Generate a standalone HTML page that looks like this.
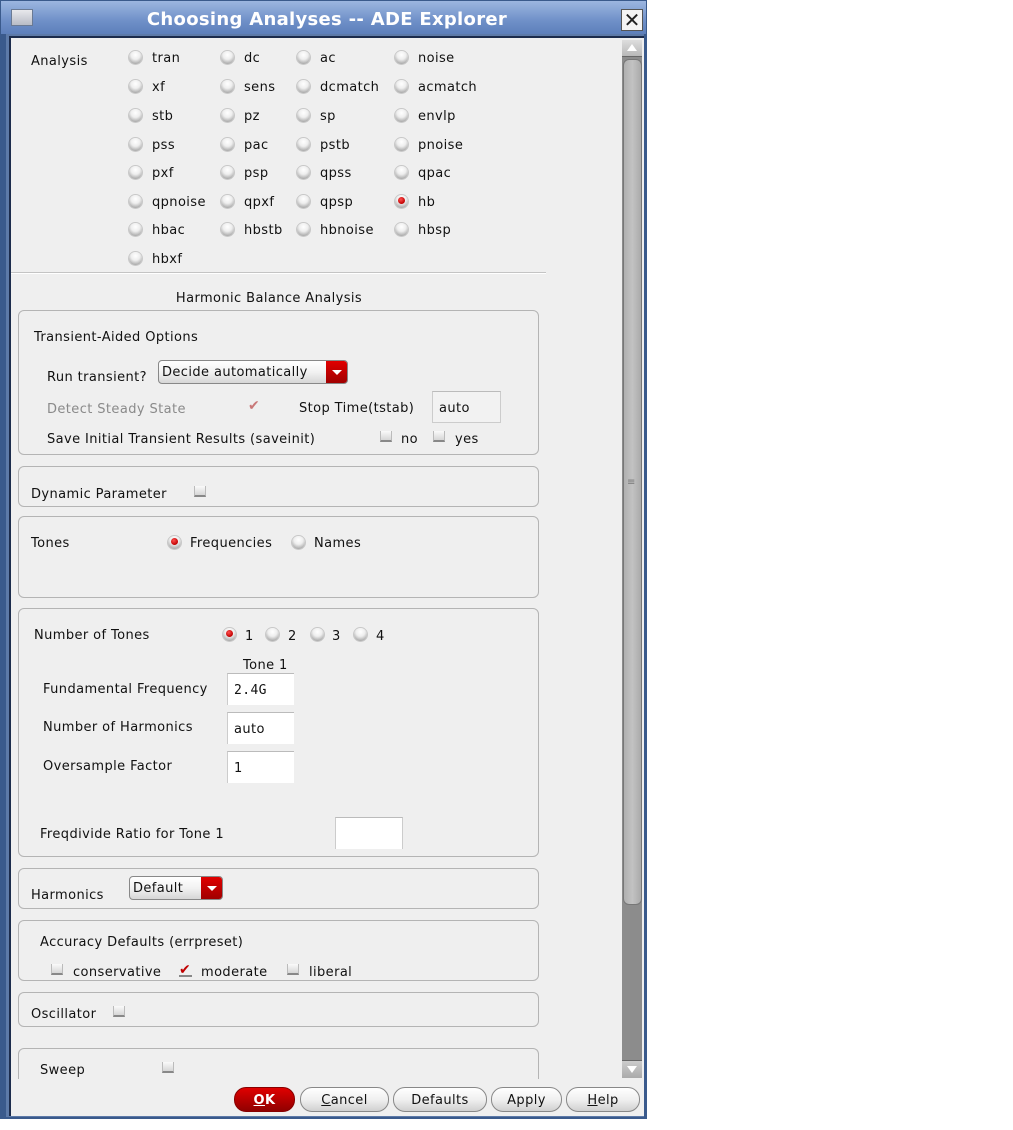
<!DOCTYPE html>
<html><head><meta charset="utf-8"><style>
*{margin:0;padding:0;box-sizing:border-box}
body{width:1013px;height:1130px;background:#fff;position:relative;overflow:hidden;font-family:"DejaVu Sans","Liberation Sans",sans-serif;font-size:13px;color:#111}
.a{position:absolute}
.t{position:absolute;line-height:16px;white-space:nowrap;letter-spacing:0.4px;margin-top:2px}
.r{position:absolute;width:13px;height:13px;border-radius:50%;background:radial-gradient(circle at 50% 30%,#fff 0,#eee 40%,#aaa 80%,#707070 100%);box-shadow:0 0 0 1px #c8c8c8}
.r.on::after{content:"";position:absolute;left:3px;top:2px;width:7px;height:7px;border-radius:50%;background:radial-gradient(circle at 40% 35%,#ff5050,#c00000 70%)}
.g{position:absolute;border:1px solid #b4b4b4;border-radius:6px;left:18px;width:521px}
.cb{position:absolute;width:12px;height:11px;border-bottom:2px solid #888;background:linear-gradient(#fafafa,#d6d6d6);border-left:1px solid #bbb;border-right:1px solid #bbb}
.ck{position:absolute;color:#c00000;font-size:14px;line-height:14px;font-weight:bold}
.in{position:absolute;background:#fff;border-top:1px solid #bbb;border-left:1px solid #ccc;height:32px;padding:9px 0 0 6px;font-size:13px;line-height:16px;letter-spacing:0.4px}
.combo{position:absolute;height:24px;border:1px solid #888;border-radius:4px;background:linear-gradient(#fff,#f2f2f2 50%,#d6d6d6);padding:3px 0 0 3px;line-height:17px;overflow:hidden;letter-spacing:0.4px}
.combo .dd{position:absolute;right:0;top:0;width:21px;height:100%;background:linear-gradient(#e00000,#a00000)}
.combo .dd::after{content:"";position:absolute;left:6px;top:9px;border-left:5px solid transparent;border-right:5px solid transparent;border-top:5px solid #fff}
.btn{position:absolute;top:1087px;height:25px;border:1px solid #888;border-radius:12px;background:linear-gradient(#fff,#f0f0f0 50%,#d0d0d0);text-align:center;line-height:25px;letter-spacing:0.4px}
</style></head><body>
<div class="a" style="left:0;top:0;width:647px;height:1119px;background:#3a5a8c"></div>
<div class="a" style="left:1px;top:1px;width:645px;height:33px;background:linear-gradient(#9cb6e0,#6f90c8 60%,#5d7fbb)"></div>
<div class="a" style="left:11px;top:9px;width:22px;height:17px;background:linear-gradient(#e8e8ec,#b8bcc6);border:1px solid #6a7a94"></div>
<div class="t" style="left:0;width:654px;top:9px;text-align:center;color:#fff;font-weight:bold;font-size:18px;line-height:20px;letter-spacing:0.3px;margin-top:1px">Choosing Analyses -- ADE Explorer</div>
<div class="a" style="left:621px;top:9px;width:22px;height:22px;background:#f4f4f4;border:1px solid #555;color:#222;font-size:20px;line-height:20px;text-align:center;font-weight:bold">✕</div>
<div class="a" style="left:6px;top:34px;width:638px;height:1083px;background:#5d7aa8"></div>
<div class="a" style="left:9px;top:36px;width:635px;height:1080px;background:#efefef;border-left:2px solid #1c2c4c;border-top:2px solid #1c2c4c"></div>

<div class="a" style="left:622px;top:40px;width:20px;height:1038px;background:#8c8c8c"></div>
<div class="a" style="left:622px;top:40px;width:20px;height:17px;background:linear-gradient(#ddd,#b8b8b8);border-bottom:1px solid #666"></div>
<div class="a" style="left:627px;top:44px;border-left:5px solid transparent;border-right:5px solid transparent;border-bottom:7px solid #fff"></div>
<div class="a" style="left:623px;top:59px;width:19px;height:846px;background:linear-gradient(90deg,#b0b0b0,#c2c2c2 50%,#aaa);border:1px solid #777;border-radius:6px"></div>
<div class="t" style="left:627px;top:473px;color:#777;font-size:10px">≡</div>
<div class="a" style="left:622px;top:1060px;width:20px;height:18px;background:linear-gradient(#ccc,#aaa);border-top:1px solid #666"></div>
<div class="a" style="left:627px;top:1066px;border-left:5px solid transparent;border-right:5px solid transparent;border-top:7px solid #fff"></div>

<div class="t" style="left:31px;top:52px">Analysis</div>
<div class="r" style="left:129px;top:51px"></div><div class="t" style="left:152px;top:49px">tran</div>
<div class="r" style="left:221px;top:51px"></div><div class="t" style="left:244px;top:49px">dc</div>
<div class="r" style="left:297px;top:51px"></div><div class="t" style="left:320px;top:49px">ac</div>
<div class="r" style="left:395px;top:51px"></div><div class="t" style="left:418px;top:49px">noise</div>

<div class="r" style="left:129px;top:80px"></div><div class="t" style="left:152px;top:78px">xf</div>
<div class="r" style="left:221px;top:80px"></div><div class="t" style="left:244px;top:78px">sens</div>
<div class="r" style="left:297px;top:80px"></div><div class="t" style="left:320px;top:78px">dcmatch</div>
<div class="r" style="left:395px;top:80px"></div><div class="t" style="left:418px;top:78px">acmatch</div>

<div class="r" style="left:129px;top:109px"></div><div class="t" style="left:152px;top:107px">stb</div>
<div class="r" style="left:221px;top:109px"></div><div class="t" style="left:244px;top:107px">pz</div>
<div class="r" style="left:297px;top:109px"></div><div class="t" style="left:320px;top:107px">sp</div>
<div class="r" style="left:395px;top:109px"></div><div class="t" style="left:418px;top:107px">envlp</div>

<div class="r" style="left:129px;top:138px"></div><div class="t" style="left:152px;top:136px">pss</div>
<div class="r" style="left:221px;top:138px"></div><div class="t" style="left:244px;top:136px">pac</div>
<div class="r" style="left:297px;top:138px"></div><div class="t" style="left:320px;top:136px">pstb</div>
<div class="r" style="left:395px;top:138px"></div><div class="t" style="left:418px;top:136px">pnoise</div>

<div class="r" style="left:129px;top:166px"></div><div class="t" style="left:152px;top:164px">pxf</div>
<div class="r" style="left:221px;top:166px"></div><div class="t" style="left:244px;top:164px">psp</div>
<div class="r" style="left:297px;top:166px"></div><div class="t" style="left:320px;top:164px">qpss</div>
<div class="r" style="left:395px;top:166px"></div><div class="t" style="left:418px;top:164px">qpac</div>

<div class="r" style="left:129px;top:195px"></div><div class="t" style="left:152px;top:193px">qpnoise</div>
<div class="r" style="left:221px;top:195px"></div><div class="t" style="left:244px;top:193px">qpxf</div>
<div class="r" style="left:297px;top:195px"></div><div class="t" style="left:320px;top:193px">qpsp</div>
<div class="r on" style="left:395px;top:195px"></div><div class="t" style="left:418px;top:193px">hb</div>

<div class="r" style="left:129px;top:223px"></div><div class="t" style="left:152px;top:221px">hbac</div>
<div class="r" style="left:221px;top:223px"></div><div class="t" style="left:244px;top:221px">hbstb</div>
<div class="r" style="left:297px;top:223px"></div><div class="t" style="left:320px;top:221px">hbnoise</div>
<div class="r" style="left:395px;top:223px"></div><div class="t" style="left:418px;top:221px">hbsp</div>

<div class="r" style="left:129px;top:252px"></div><div class="t" style="left:152px;top:250px">hbxf</div>

<div class="a" style="left:11px;top:272px;width:535px;height:2px;border-top:1px solid #c4c4c4;border-bottom:1px solid #fff"></div>
<div class="t" style="left:0;width:538px;top:289px;text-align:center">Harmonic Balance Analysis</div>

<div class="g" style="top:310px;height:145px"></div>
<div class="t" style="left:34px;top:328px">Transient-Aided Options</div>
<div class="t" style="left:47px;top:368px">Run transient?</div>
<div class="combo" style="left:158px;top:360px;width:190px">Decide automatically<div class="dd"></div></div>
<div class="t" style="left:47px;top:400px;color:#8a8a8a">Detect Steady State</div>
<div class="ck" style="left:248px;top:399px;color:#c87878">✔</div>
<div class="t" style="left:299px;top:399px">Stop Time(tstab)</div>
<div class="in" style="left:432px;top:391px;width:69px;background:#f2f2f2;border-right:1px solid #ccc;border-bottom:1px solid #ccc">auto</div>
<div class="t" style="left:47px;top:430px">Save Initial Transient Results (saveinit)</div>
<div class="cb" style="left:380px;top:431px"></div><div class="t" style="left:401px;top:430px">no</div>
<div class="cb" style="left:433px;top:431px"></div><div class="t" style="left:455px;top:430px">yes</div>

<div class="g" style="top:466px;height:41px"></div>
<div class="t" style="left:31px;top:485px">Dynamic Parameter</div>
<div class="cb" style="left:194px;top:486px"></div>

<div class="g" style="top:516px;height:82px"></div>
<div class="t" style="left:31px;top:534px">Tones</div>
<div class="r on" style="left:168px;top:536px"></div><div class="t" style="left:190px;top:534px">Frequencies</div>
<div class="r" style="left:292px;top:536px"></div><div class="t" style="left:314px;top:534px">Names</div>

<div class="g" style="top:608px;height:249px"></div>
<div class="t" style="left:34px;top:626px">Number of Tones</div>
<div class="r on" style="left:223px;top:628px"></div><div class="t" style="left:245px;top:627px">1</div>
<div class="r" style="left:266px;top:628px"></div><div class="t" style="left:288px;top:627px">2</div>
<div class="r" style="left:311px;top:628px"></div><div class="t" style="left:332px;top:627px">3</div>
<div class="r" style="left:354px;top:628px"></div><div class="t" style="left:376px;top:627px">4</div>
<div class="t" style="left:243px;top:656px">Tone 1</div>
<div class="t" style="left:43px;top:680px">Fundamental Frequency</div>
<div class="in" style="left:227px;top:673px;width:67px;font-family:'DejaVu Sans Mono','Liberation Mono',monospace">2.4G</div>
<div class="t" style="left:43px;top:718px">Number of Harmonics</div>
<div class="in" style="left:227px;top:712px;width:67px">auto</div>
<div class="t" style="left:43px;top:757px">Oversample Factor</div>
<div class="in" style="left:227px;top:751px;width:67px">1</div>
<div class="t" style="left:40px;top:825px">Freqdivide Ratio for Tone 1</div>
<div class="in" style="left:335px;top:817px;width:68px;border-right:1px solid #ccc"></div>

<div class="g" style="top:868px;height:41px"></div>
<div class="t" style="left:31px;top:886px">Harmonics</div>
<div class="combo" style="left:129px;top:876px;width:94px">Default<div class="dd"></div></div>

<div class="g" style="top:920px;height:61px"></div>
<div class="t" style="left:40px;top:933px">Accuracy Defaults (errpreset)</div>
<div class="cb" style="left:51px;top:964px"></div><div class="t" style="left:73px;top:963px">conservative</div>
<div class="ck" style="left:179px;top:963px">✔</div><div class="a" style="left:179px;top:975px;width:13px;height:2px;background:#888"></div>
<div class="t" style="left:201px;top:963px">moderate</div>
<div class="cb" style="left:287px;top:964px"></div><div class="t" style="left:309px;top:963px">liberal</div>

<div class="g" style="top:992px;height:35px"></div>
<div class="t" style="left:31px;top:1005px">Oscillator</div>
<div class="cb" style="left:113px;top:1006px"></div>

<div class="g" style="top:1048px;height:40px;border-bottom:none;border-radius:6px 6px 0 0"></div>
<div class="a" style="left:11px;top:1079px;width:611px;height:37px;background:#efefef"></div>
<div class="t" style="left:40px;top:1061px">Sweep</div>
<div class="cb" style="left:162px;top:1062px"></div>

<div class="btn" style="left:234px;width:61px;background:linear-gradient(#e00000,#b00000 60%,#900000);border-color:#800;color:#fff;font-weight:bold"><u>O</u>K</div>
<div class="btn" style="left:300px;width:89px"><u>C</u>ancel</div>
<div class="btn" style="left:393px;width:94px">Defaults</div>
<div class="btn" style="left:491px;width:71px">Apply</div>
<div class="btn" style="left:566px;width:74px"><u>H</u>elp</div>
</body></html>
